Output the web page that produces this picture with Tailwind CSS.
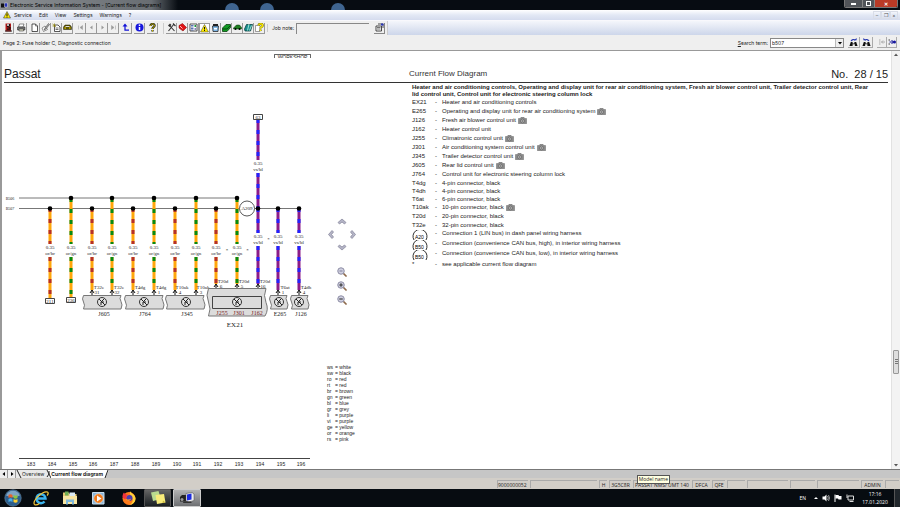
<!DOCTYPE html>
<html lang="en">
<head>
    <meta charset="UTF-8">
    <meta name="viewport" content="width=device-width, initial-scale=1.0">
    <title>Electronic Service Information System</title>
    <script src="https://cdn.jsdelivr.net/npm/@tailwindcss/browser@4"></script>
</head>

<body class="h-screen flex flex-col overflow-hidden bg-[#efefef] font-['Inter',sans-serif] text-[5px] leading-[8px] text-[#222]">
    <svg class="hidden">
        <symbol id="camera" viewBox="0 0 18 14">
            <path d="M1 3h4l1-2.500h6l1 2.500h4v10.500H1z" fill="#8b8b8b" stroke="#666" />
            <circle cx="9" cy="8" r="3.800" fill="#bbb" stroke="#555" stroke-width="1.200" />
            <circle cx="9" cy="8" r="1.500" fill="#666" />
        </symbol>
        <symbol id="binoculars" viewBox="0 0 20 20">
            <path d="M4 9h4v3h4V9h4l3 9h-6v-4h-5v4H1z" fill="#111" />
            <path d="M5 7a5 4 0 0 1 9-2" fill="none" stroke="#2a3ab0" stroke-width="2.500" />
            <path d="M11 5h6V0z" fill="#2a3ab0" />
        </symbol>
        <symbol id="lens" viewBox="0 0 20 20">
            <path d="M12 12l6 6" stroke="#8d6a4c" stroke-width="3.500" stroke-linecap="round" />
            <circle cx="8" cy="8" r="6.500" fill="#cfcfe0" stroke="#8d8da4" stroke-width="2" />
        </symbol>
        <symbol id="chevron" viewBox="0 0 20 14">
            <path d="M2 9l8-7 8 7-3 3-5-4-5 4z" fill="#b4b4c6" stroke="#85859b" stroke-width="1.500" />
        </symbol>
    </svg>

    <!-- Title bar -->
    <header class="relative h-[10px] shrink-0 flex items-center justify-between overflow-hidden bg-[#070c12]">
        <svg class="absolute inset-0 h-full w-[400px]" viewBox="0 0 400 10">
            <defs>
                <linearGradient id="glow" x1="0" x2="1">
                    <stop offset="0" stop-color="#8b8f93" />
                    <stop offset="0.850" stop-color="#686d72" />
                    <stop offset="1" stop-color="#070c12" />
                </linearGradient>
            </defs>
            <rect width="178" height="10" fill="url(#glow)" />
            <circle cx="232" cy="10" r="7" fill="#3f6590" />
            <circle cx="267" cy="10" r="7" fill="#3f6590" />
            <circle cx="338" cy="10" r="7" fill="#3f6590" />
        </svg>
        <div class="relative flex items-center gap-[2px] pl-px text-black">
            <svg class="size-[7px]" viewBox="0 0 14 14"><path d="M0 3h8v8H0z" fill="#111" /><path d="M7 2h6v8H7z" fill="#2733b5" stroke="#ddd" /></svg>
            <h1>Electronic Service Information System - [Current flow diagrams]</h1>
        </div>
        <div class="relative flex self-start h-[8px] mr-[2px] rounded-b-[2px] overflow-hidden border border-t-0 border-[#777]">
            <button aria-label="Minimize" class="w-[17px] grid place-items-center bg-[#515459]"><span class="w-[5px] h-[2px] bg-white"></span></button>
            <button aria-label="Restore" class="w-[13px] grid place-items-center bg-[#515459] border-x border-[#888]"><span class="size-[5px] border border-white"></span></button>
            <button aria-label="Close" class="w-[22px] grid place-items-center bg-[#b93a26] text-white font-bold leading-[6px]">✕</button>
        </div>
    </header>

    <!-- Menu -->
    <nav class="h-[11px] shrink-0 flex items-center pl-[3px] bg-linear-to-b from-white via-[#e3e8f5] to-[#d5dcee] border-b border-[#f8f8fc]">
        <svg class="size-[8px] mr-[3px]" viewBox="0 0 16 16"><path d="M8 1l7 13H1z" fill="#ffec00" stroke="#222" /><path d="M8 5v5M8 11v2" stroke="#111" stroke-width="2" /></svg>
        <div class="flex gap-[7px]">
            <button>Service</button>
            <button>Edit</button>
            <button>View</button>
            <button>Settings</button>
            <button>Warnings</button>
            <button>?</button>
        </div>
        <div class="ml-auto mr-[2px] flex text-[#555]">
            <button aria-label="Minimize document" class="w-[8px] border border-[#d9dde8] leading-[6px]">–</button>
            <button aria-label="Restore document" class="w-[9px] border border-[#d9dde8] leading-[6px]">❐</button>
            <button aria-label="Close document" class="w-[8px] border border-[#d9dde8] leading-[6px]">×</button>
        </div>
    </nav>

    <!-- Toolbar -->
    <div class="h-[14px] shrink-0 flex bg-linear-to-b from-[#f4f6fb] to-[#cdd6ea]">
        <div class="w-[388px] flex items-center gap-[2px] pl-[3px] bg-[#efefef] border-r border-[#ccc]">
            <button aria-label="Exit" class="size-[11px] grid place-items-center border-r border-b border-[#999]">
                <svg class="size-[9px]" viewBox="0 0 18 18"><path d="M3 1h11v16H3z" fill="#b51919" /><path d="M12 3H7v4l5 2v3H6m5-9v3" fill="none" stroke="#111" stroke-width="2.500" /><circle cx="8" cy="4" r="2" fill="#eee" /><path d="M2 16h14" stroke="#222" stroke-width="2" /></svg>
            </button>
            <button aria-label="Print" class="size-[11px] grid place-items-center border-r border-b border-[#999]">
                <svg class="size-[9px]" viewBox="0 0 18 18"><path d="M5 2h9l-2 6H3z" fill="#fff" stroke="#222" /><path d="M1 8h15v6H1z" fill="#777" stroke="#222" /><path d="M4 12h9v4H4z" fill="#d8d8c0" stroke="#222" /></svg>
            </button>
            <div class="flex">
                <button aria-label="New" class="size-[11px] grid place-items-center border-r border-b border-[#999]">
                    <svg class="size-[9px]" viewBox="0 0 18 18"><path d="M4 2h7l4 4v11H4z" fill="#fff" stroke="#222" stroke-width="1.500" /><path d="M11 2v4h4" fill="none" stroke="#222" /></svg>
                </button>
                <button aria-label="Edit" class="size-[11px] grid place-items-center border-r border-b border-[#999]">
                    <svg class="size-[9px]" viewBox="0 0 18 18"><path d="M2 10l6-4 5 7-8 4z" fill="#fff" stroke="#333" /><path d="M15 1l-7 9-2 4 4-2 7-9z" fill="#aaa" stroke="#333" /></svg>
                </button>
                <button aria-label="Order" class="size-[11px] grid place-items-center border-r border-b border-[#999]">
                    <svg class="size-[9px]" viewBox="0 0 18 18"><path d="M5 4h7l4 4v9H5z" fill="#fff" stroke="#222" stroke-width="1.500" /><path d="M1 2l6 5M5 1v6M1 6h7" stroke="#887c00" stroke-width="1.500" /><path d="M7 10h6M7 13h6" stroke="#444" stroke-width="1.500" /></svg>
                </button>
                <button aria-label="Vehicle" class="size-[11px] grid place-items-center border-r border-b border-[#999]">
                    <svg class="size-[9px]" viewBox="0 0 18 18"><path d="M1 8l3-4h10l3 4v5H1z" fill="#5c5400" stroke="#221f00" /><path d="M5 6h8v2H5z" fill="#ddd" /><path d="M3 10h3M12 10h3" stroke="#ffe100" stroke-width="2" /></svg>
                </button>
            </div>
            <div class="flex">
                <button aria-label="First" class="size-[11px] grid place-items-center border-r border-b border-[#999]"><svg class="size-[7px]" viewBox="0 0 14 14"><path d="M3 3v8M11 3L6 7l5 4z" fill="#999" stroke="#999" /></svg></button>
                <button aria-label="Previous" class="size-[11px] grid place-items-center border-r border-b border-[#999]"><svg class="size-[7px]" viewBox="0 0 14 14"><path d="M9 3L4 7l5 4z" fill="#999" /></svg></button>
                <button aria-label="Next" class="size-[11px] grid place-items-center border-r border-b border-[#999]"><svg class="size-[7px]" viewBox="0 0 14 14"><path d="M5 3l5 4-5 4z" fill="#999" /></svg></button>
                <button aria-label="Last" class="size-[11px] grid place-items-center border-r border-b border-[#999]"><svg class="size-[7px]" viewBox="0 0 14 14"><path d="M11 3v8M3 3l5 4-5 4z" fill="#999" stroke="#999" /></svg></button>
            </div>
            <button aria-label="Back" class="size-[11px] grid place-items-center border-r border-b border-[#999]">
                <svg class="size-[9px]" viewBox="0 0 18 18"><path d="M6 5v9h8" fill="none" stroke="#1414d8" stroke-width="2.500" /><path d="M1 7l5-6 5 6z" fill="#1414d8" /></svg>
            </button>
            <button aria-label="Info" class="size-[11px] grid place-items-center border-r border-b border-[#999]">
                <svg class="size-[9px]" viewBox="0 0 18 18"><circle cx="9" cy="9" r="8" fill="#1717dd" /><path d="M9 3v3M9 8v6" stroke="#fff" stroke-width="3" /></svg>
            </button>
            <button aria-label="Help" class="size-[11px] grid place-items-center border-r border-b border-[#999]">
                <svg class="size-[9px]" viewBox="0 0 18 18"><path d="M5 6c0-6 9-5 8 0-1 3-4 2-4 6M9 14v3" fill="none" stroke="#222" stroke-width="4.500" /><path d="M5 6c0-6 9-5 8 0-1 3-4 2-4 6M9 14v3" fill="none" stroke="#c9bb00" stroke-width="2" /></svg>
            </button>
            <div class="ml-[3px] pl-[2px] flex border-l border-[#ccc]">
                <button aria-label="Repair" class="size-[11px] grid place-items-center border-r border-b border-[#999]">
                    <svg class="size-[9px]" viewBox="0 0 18 18"><path d="M2 5l4-4 3 3-4 4z" fill="#333" /><path d="M5 5l10 11M14 2L3 16M12 1l5 5" fill="none" stroke="#333" stroke-width="2.200" /></svg>
                </button>
                <button aria-label="Maintenance" class="size-[11px] grid place-items-center border-r border-b border-[#999]">
                    <svg class="size-[9px]" viewBox="0 0 18 18"><path d="M2 5l7-4 8 8-7 7-8-6z" fill="#e01515" stroke="#700" /><path d="M4 6l5 5" stroke="#fff" stroke-width="1.500" /></svg>
                </button>
                <button aria-label="Body" class="size-[11px] grid place-items-center border-r border-b border-[#999]">
                    <svg class="size-[9px]" viewBox="0 0 18 18"><path d="M2 2h14v14H2z" fill="#fff" stroke="#222" stroke-width="1.500" /><path d="M4 5h5M4 8h5M4 11h5M4 14h5" stroke="#249" stroke-width="1.500" /><path d="M11 4h3v4h-3z" fill="#1a9a3a" /><path d="M11 10h3v4h-3z" fill="#88b" /></svg>
                </button>
                <button aria-label="Warnings" class="size-[11px] grid place-items-center border border-[#999] bg-white">
                    <svg class="size-[9px]" viewBox="0 0 18 18"><path d="M9 1l8 15H1z" fill="#ffec00" stroke="#333" /><path d="M9 6v5M9 12v2" stroke="#111" stroke-width="2" /></svg>
                </button>
                <button aria-label="Fluids" class="size-[11px] grid place-items-center border-r border-b border-[#999]">
                    <svg class="size-[9px]" viewBox="0 0 18 18"><path d="M3 6h12l-1 11H4z" fill="#7fb7e6" stroke="#222" stroke-width="1.500" /><path d="M4 2h10v4H4z" fill="#222" /><path d="M6 10h6v3H6z" fill="#fff" /></svg>
                </button>
                <button aria-label="Workshop manual" class="size-[11px] grid place-items-center border-r border-b border-[#999]">
                    <svg class="size-[9px]" viewBox="0 0 18 18"><path d="M1 10l7-7h9v6l-7 8H1z" fill="#129a22" stroke="#053a0a" stroke-width="1.500" /><path d="M2 12h8l7-7" fill="none" stroke="#064d0d" stroke-width="2" /></svg>
                </button>
                <button aria-label="Labour" class="size-[11px] grid place-items-center border-r border-b border-[#999]">
                    <svg class="size-[9px]" viewBox="0 0 18 18"><path d="M1 10l3-3 3-3h6l4 5v3H1z" fill="#1f7d1f" stroke="#093009" /><circle cx="5" cy="12" r="2" /><circle cx="13" cy="12" r="2" /></svg>
                </button>
                <button aria-label="Manuals" class="size-[11px] grid place-items-center border-r border-b border-[#999]">
                    <svg class="size-[9px]" viewBox="0 0 18 18"><path d="M1 12l4-9h12l-4 13H2z" fill="#1a8f8f" stroke="#063b3b" stroke-width="1.500" /><path d="M10 2L7 15M15 5l-4 10" stroke="#cfe" stroke-width="1.500" /></svg>
                </button>
                <button aria-label="Vehicle help" class="size-[11px] grid place-items-center border-r border-b border-[#999]">
                    <svg class="size-[9px]" viewBox="0 0 18 18"><path d="M1 5h9v12H1z" fill="#fff" stroke="#444" /><path d="M7 5c1-5 10-4 8 1-1 2-4 2-4 5M11 13v3" fill="none" stroke="#777000" stroke-width="4.500" /><path d="M7 5c1-5 10-4 8 1-1 2-4 2-4 5M11 13v3" fill="none" stroke="#ffee00" stroke-width="2.500" /></svg>
                </button>
            </div>
            <label for="jobNote" class="pl-[4px] whitespace-nowrap border-l border-[#ccc]">Job note:</label>
            <input id="jobNote" type="text" class="w-[73px] h-[11px] px-px border-t border-l border-[#888]">
            <button aria-label="Edit note" class="ml-[3px] size-[11px] grid place-items-center border-r border-b border-[#888]">
                <svg class="size-[9px]" viewBox="0 0 18 18"><path d="M2 6h11v10H2zM6 2h10v8" fill="#fff" stroke="#333" stroke-width="1.800" /><path d="M4 9h7M4 12h7" stroke="#444" stroke-width="1.500" /><path d="M12 1h5v4h-5z" fill="#2835b8" /></svg>
            </button>
        </div>
    </div>

    <!-- Page info and search -->
    <div class="h-[16px] shrink-0 flex items-center justify-between pl-[3px] pr-[3px] border-b border-[#999]">
        <p>Page 2: Fuse holder C, Diagnostic connection</p>
        <form class="flex items-center gap-[2px]">
            <label for="searchTerm"><u>S</u>earch term:</label>
            <div class="flex h-[10px] w-[74px] bg-white border border-[#888]">
                <input id="searchTerm" type="text" value="b507" class="min-w-0 flex-1 px-px">
                <button type="button" aria-label="Show list" class="w-[8px] grid place-items-center bg-[#eee] border-l border-[#bbb]"><svg class="size-[4px]" viewBox="0 0 8 8"><path d="M0 2h8L4 7z" /></svg></button>
            </div>
            <div class="ml-[2px] flex gap-px">
                <button type="button" aria-label="Search forward" class="w-[12px] h-[11px] grid place-items-center border-r border-b border-[#aaa]"><svg class="size-[9px]"><use href="#binoculars" /></svg></button>
                <button type="button" aria-label="Search back" class="w-[12px] h-[11px] grid place-items-center border-r border-b border-[#aaa]"><svg class="size-[9px] -scale-x-100"><use href="#binoculars" /></svg></button>
            </div>
            <div class="ml-[2px] flex">
                <button type="button" aria-label="Previous hit" class="w-[10px] h-[11px] grid place-items-center border-r border-b border-[#aaa]"><svg class="size-[8px]" viewBox="0 0 16 16"><path d="M2 4h3M2 8h3M2 12h3M7 8h7M10 5L7 8l3 3" fill="none" stroke="#aaa" stroke-width="2" /></svg></button>
                <button type="button" aria-label="Next hit" class="w-[10px] h-[11px] grid place-items-center border-r border-b border-[#aaa]"><svg class="size-[8px]" viewBox="0 0 16 16"><path d="M1 4h3M1 12h3" fill="none" stroke="#444" stroke-width="2" /><path d="M3 8h9M7 4l4 4-4 4" fill="none" stroke="#15159c" stroke-width="2" /><circle cx="13" cy="8" r="3" fill="#15159c" /></svg></button>
            </div>
        </form>
    </div>

    <!-- Document -->
    <div class="flex-1 min-h-0 flex bg-white border-l-2 border-[#999] font-['Liberation_Sans',sans-serif]">
        <main class="flex-1 min-w-0 flex flex-col">
            <div class="h-[16px] shrink-0 pl-[272px] pt-[3px]">
                <div class="w-[37px] h-[4px] overflow-hidden rounded-t-[1px] border border-b-0 border-[#666] text-center leading-[4px]">WORKSHOP</div>
            </div>
            <div class="h-[16px] shrink-0 ml-[2px] mr-[3px] pb-[2px] grid grid-cols-[405px_1fr_auto] items-center border-b border-[#333]">
                <h2 class="text-[12px] leading-[12px]">Passat</h2>
                <h3 class="text-[8px] leading-[12px] text-[#333]">Current Flow Diagram</h3>
                <p class="text-[11px] leading-[12px] whitespace-pre">No.  28 / 15</p>
            </div>
            <div class="flex-1 min-h-0 flex">
                <svg id="diagram" class="w-[318px] h-[387px] shrink-0 font-['Liberation_Serif',serif] text-[5px]" viewBox="2 83 318 387" text-anchor="middle" fill="#222">
                    <path d="M19 198H237M19 208.500H240M254 208.500H299" stroke="#777" fill="none" />
                    <g id="wires"></g>
                    <text x="10" y="200" font-size="4">B506</text>
                    <text x="10" y="210" font-size="4">B507</text>
                    <circle cx="247" cy="208.500" r="7.500" fill="#fff" stroke="#555" />
                    <text x="247" y="210">A209</text>
                    <g fill="#fff" stroke="#444">
                        <path d="M45.500 298.500h9v5h-9zM66.500 297.500h9v5h-9zM253.500 114.500h9v5h-9z" />
                    </g>
                    <text x="50" y="303">211</text>
                    <text x="71" y="302">236</text>
                    <text x="258" y="119">63</text>
                    <g fill="#dcdcdc" stroke="#777">
                        <path d="M83.500 295.500H121q-2 3 0 6t0 7.500H83.500q2-4 0-7t0-6.500z" />
                        <path d="M125.500 295.500H163q-2 3 0 6t0 7.500H125.500q2-4 0-7t0-6.500z" />
                        <path d="M166.500 295.500H204q-2 3 0 6t0 7.500H166.500q2-4 0-7t0-6.500z" />
                        <path d="M208.500 288.500H266q-3 7 0 14t-1 13.500H208.500q3-7 0-14t0-13.500z" />
                        <path d="M212.500 296.500h49v12h-49z" stroke="#444" />
                        <path d="M270.500 295.500H287q-2 3 0 6t0 7.500H270.500q2-4 0-7t0-6.500z" />
                        <path d="M291.500 295.500H308q-2 3 0 6t0 7.500H291.500q2-4 0-7t0-6.500z" />
                    </g>
                    <g id="units"></g>
                    <g font-size="6">
                        <text x="104" y="316">J605</text>
                        <text x="145" y="316">J764</text>
                        <text x="187" y="316">J345</text>
                        <text x="222" y="315" fill="#722">J255</text>
                        <text x="239" y="315" fill="#722">J301</text>
                        <text x="257" y="315" fill="#722">J162</text>
                        <text x="280" y="316">E265</text>
                        <text x="301" y="316">J126</text>
                    </g>
                    <text x="235" y="327" font-size="7">EX21</text>
                    <text x="227" y="252">*</text>
                    <text x="247.500" y="252">*</text>
                    <text x="268.500" y="241">*</text>
                    <path d="M19 458.500H310" stroke="#444" />
                    <g id="tracks" class="font-['Liberation_Sans',sans-serif]"></g>
                </svg>

                <!-- Navigation and colour key -->
                <div class="w-[90px] shrink-0 pt-[135px] pl-[5px]">
                    <div class="w-[34px] grid grid-cols-3 place-items-center gap-y-[6px]">
                        <button aria-label="Up" class="col-start-2 row-start-1"><svg class="w-[10px] h-[7px]"><use href="#chevron" /></svg></button>
                        <button aria-label="Left" class="col-start-1 row-start-2"><svg class="w-[10px] h-[7px] -rotate-90"><use href="#chevron" /></svg></button>
                        <button aria-label="Right" class="col-start-3 row-start-2"><svg class="w-[10px] h-[7px] rotate-90"><use href="#chevron" /></svg></button>
                        <button aria-label="Down" class="col-start-2 row-start-3"><svg class="w-[10px] h-[7px] rotate-180"><use href="#chevron" /></svg></button>
                    </div>
                    <div class="w-[34px] mt-[16px] flex flex-col items-center gap-[4px]">
                        <button aria-label="Fit"><svg class="size-[10px]" viewBox="0 0 20 20"><use href="#lens" /><path d="M5 8h6" stroke="#9a9ab0" stroke-width="3" /></svg></button>
                        <button aria-label="Zoom in"><svg class="size-[10px]" viewBox="0 0 20 20"><use href="#lens" /><path d="M8 4.500v7M4.500 8h7" stroke="#333" stroke-width="2.200" /></svg></button>
                        <button aria-label="Zoom out"><svg class="size-[10px]" viewBox="0 0 20 20"><use href="#lens" /><path d="M4.500 8h7" stroke="#333" stroke-width="2.200" /></svg></button>
                    </div>
                    <dl class="mt-[59px] ml-[2px] grid grid-cols-[8px_1fr] leading-[6px]">
                        <dt>ws</dt><dd>= white</dd>
                        <dt>sw</dt><dd>= black</dd>
                        <dt>ro</dt><dd>= red</dd>
                        <dt>rt</dt><dd>= red</dd>
                        <dt>br</dt><dd>= brown</dd>
                        <dt>gn</dt><dd>= green</dd>
                        <dt>bl</dt><dd>= blue</dd>
                        <dt>gr</dt><dd>= grey</dd>
                        <dt>li</dt><dd>= purple</dd>
                        <dt>vi</dt><dd>= purple</dd>
                        <dt>ge</dt><dd>= yellow</dd>
                        <dt>or</dt><dd>= orange</dd>
                        <dt>rs</dt><dd>= pink</dd>
                    </dl>
                </div>

                <!-- Component list -->
                <section class="flex-1 min-w-0 pt-px pl-[2px] text-[6px] leading-[7px]">
                    <h4 class="pr-[16px] font-bold">Heater and air conditioning controls, Operating and display unit for rear air conditioning system, Fresh air blower control unit, Trailer detector control unit, Rear lid control unit, Control unit for electronic steering column lock</h4>
                    <table class="text-left">
                        <tbody>
                            <tr class="h-[9px]"><td class="w-[23px]">EX21</td><td class="w-[7px]">-</td><td>Heater and air conditioning controls</td></tr>
                            <tr class="h-[9px]"><td>E265</td><td>-</td><td class="flex items-center gap-[2px] pt-px">Operating and display unit for rear air conditioning system <svg class="w-[9px] h-[7px]"><use href="#camera" /></svg></td></tr>
                            <tr class="h-[9px]"><td>J126</td><td>-</td><td class="flex items-center gap-[2px] pt-px">Fresh air blower control unit <svg class="w-[9px] h-[7px]"><use href="#camera" /></svg></td></tr>
                            <tr class="h-[9px]"><td>J162</td><td>-</td><td>Heater control unit</td></tr>
                            <tr class="h-[9px]"><td>J255</td><td>-</td><td class="flex items-center gap-[2px] pt-px">Climatronic control unit <svg class="w-[9px] h-[7px]"><use href="#camera" /></svg></td></tr>
                            <tr class="h-[9px]"><td>J301</td><td>-</td><td class="flex items-center gap-[2px] pt-px">Air conditioning system control unit <svg class="w-[9px] h-[7px]"><use href="#camera" /></svg></td></tr>
                            <tr class="h-[9px]"><td>J345</td><td>-</td><td class="flex items-center gap-[2px] pt-px">Trailer detector control unit <svg class="w-[9px] h-[7px]"><use href="#camera" /></svg></td></tr>
                            <tr class="h-[9px]"><td>J605</td><td>-</td><td class="flex items-center gap-[2px] pt-px">Rear lid control unit <svg class="w-[9px] h-[7px]"><use href="#camera" /></svg></td></tr>
                            <tr class="h-[9px]"><td>J764</td><td>-</td><td>Control unit for electronic steering column lock</td></tr>
                            <tr class="h-[8px]"><td>T4dg</td><td>-</td><td>4-pin connector, black</td></tr>
                            <tr class="h-[8px]"><td>T4dh</td><td>-</td><td>4-pin connector, black</td></tr>
                            <tr class="h-[8px]"><td>T6at</td><td>-</td><td>6-pin connector, black</td></tr>
                            <tr class="h-[9px]"><td>T10ak</td><td>-</td><td class="flex items-center gap-[2px] pt-px">10-pin connector, black <svg class="w-[9px] h-[7px]"><use href="#camera" /></svg></td></tr>
                            <tr class="h-[9px]"><td>T20d</td><td>-</td><td>20-pin connector, black</td></tr>
                            <tr class="h-[9px]"><td>T32e</td><td>-</td><td>32-pin connector, black</td></tr>
                            <tr class="h-[10px] align-top"><td><svg class="w-[16px] h-[10px]" viewBox="0 0 16 10"><path d="M2 10a7 7 0 1 1 12 0" fill="none" stroke="#333" /><text x="3" y="9" font-size="5">A20</text></svg></td><td>-</td><td>Connection 1 (LIN bus) in dash panel wiring harness</td></tr>
                            <tr class="h-[10px] align-top"><td><svg class="w-[16px] h-[10px]" viewBox="0 0 16 10"><path d="M2 10a7 7 0 1 1 12 0" fill="none" stroke="#333" /><text x="3" y="9" font-size="5">B50</text></svg></td><td>-</td><td>Connection (convenience CAN bus, high), in interior wiring harness</td></tr>
                            <tr class="h-[10px] align-top"><td><svg class="w-[16px] h-[10px]" viewBox="0 0 16 10"><path d="M2 10a7 7 0 1 1 12 0" fill="none" stroke="#333" /><text x="3" y="9" font-size="5">B50</text></svg></td><td>-</td><td>Connection (convenience CAN bus, low), in interior wiring harness</td></tr>
                            <tr class="h-[9px]"><td>*</td><td>-</td><td>see applicable current flow diagram</td></tr>
                        </tbody>
                    </table>
                </section>
            </div>
        </main>
        <div class="w-[9px] shrink-0 flex flex-col items-center justify-between py-[2px] bg-[#f3f3f3] border-l border-[#e2e2e2]">
            <svg class="size-[4px]" viewBox="0 0 8 8"><path d="M0 6h8L4 1z" fill="#555" /></svg>
            <div class="flex-1 w-full flex flex-col px-px">
                <div class="flex-[295]"></div>
                <div class="flex-[22] grid place-content-center gap-px bg-[#dedede] border border-[#999] rounded-[1px]"><span class="w-[3px] h-px bg-[#777]"></span><span class="w-[3px] h-px bg-[#777]"></span><span class="w-[3px] h-px bg-[#777]"></span></div>
                <div class="flex-[90]"></div>
            </div>
            <svg class="size-[4px]" viewBox="0 0 8 8"><path d="M0 2h8L4 7z" fill="#555" /></svg>
        </div>
    </div>

    <!-- Sheet tabs -->
    <div class="h-[9px] shrink-0 flex bg-[#c6c6c6] border-t border-[#777]">
        <button aria-label="Scroll tabs left" class="w-[8px] grid place-items-center bg-[#eee] border-r border-[#999]"><svg class="size-[4px]" viewBox="0 0 8 8"><path d="M6 0v8L1 4z" /></svg></button>
        <button aria-label="Scroll tabs right" class="w-[8px] grid place-items-center bg-[#eee] border-r border-[#999]"><svg class="size-[4px]" viewBox="0 0 8 8"><path d="M2 0v8l5-4z" /></svg></button>
        <button class="flex bg-[#e9e9e9]"><svg class="w-[6px] h-[8px]" viewBox="0 0 6 8"><path d="M1 0l4 8" stroke="#222" /></svg>Overview<svg class="w-[7px] h-[8px]" viewBox="0 0 7 8"><path d="M3 0h4v8z" fill="#fff" /><path d="M3 0l4 8M5 1Q6 4 3 7" fill="none" stroke="#222" /></svg></button>
        <button class="flex bg-white font-bold">Current flow diagram<svg class="w-[6px] h-[8px]" viewBox="0 0 6 8"><path d="M6 0v8H2z" fill="#c6c6c6" /><path d="M5 0L2 8" stroke="#222" /></svg></button>
    </div>

    <!-- Status bar -->
    <footer class="relative h-[11px] shrink-0 flex justify-end items-end gap-[2px] pr-px pb-px bg-[#d2cec8] font-['Open_Sans',sans-serif] leading-[8px]">
        <span class="w-[31px] h-[8px] border-l border-t border-[#aaa] whitespace-nowrap">9000000052</span>
        <span class="w-[67px] h-[8px] border-l border-t border-[#aaa]"></span>
        <span class="w-[8px] h-[8px] border-l border-t border-[#aaa] text-center">H</span>
        <span class="w-[22px] h-[8px] border-l border-t border-[#aaa] text-center">3G5C8R</span>
        <span class="w-[57px] h-[8px] border-l border-t border-[#aaa] text-center whitespace-nowrap">PASSAT NMS/ UMT 140</span>
        <span class="w-[18px] h-[8px] border-l border-t border-[#aaa] text-center">DFCA</span>
        <span class="w-[13px] h-[8px] border-l border-t border-[#aaa] text-center">QFE</span>
        <span class="w-[18px] h-[8px] border-l border-t border-[#aaa]"></span>
        <span class="w-[41px] h-[8px] border-l border-t border-[#aaa]"></span>
        <span class="w-[25px] h-[8px] border-l border-t border-[#aaa]"></span>
        <span class="w-[42px] h-[8px] border-l border-t border-[#aaa]"></span>
        <span class="w-[22px] h-[8px] border-l border-t border-[#aaa] text-center">ADMIN</span>
        <span class="w-[14px] h-[8px] border-l border-t border-[#aaa]"></span>
        <div role="tooltip" class="absolute right-[230px] -top-[3px] h-[9px] px-px bg-[#ffffe1] border border-[#555] leading-[7px]">Model name</div>
    </footer>

    <!-- Taskbar -->
    <div class="h-[18px] shrink-0 flex items-center bg-[#070c11] text-white font-['Open_Sans',sans-serif]">
        <button aria-label="Start" class="w-[26px] grid place-items-center">
            <svg class="size-[18px]" viewBox="0 0 36 36"><circle cx="18" cy="18" r="16.500" fill="#2b5d8c" stroke="#7896b1" /><path d="M4 13a15 15 0 0 1 28 0q-14 6-28 0" fill="#7ea5c5" /><path d="M9 12q4-3 8 0v6q-4-3-8 0z" fill="#e8632a" /><path d="M19 12q4 3 8 0v6q-4 3-8 0z" fill="#8cc63f" /><path d="M9 20q4-3 8 0v6q-4-3-8 0z" fill="#4bb0e8" /><path d="M19 20q4 3 8 0v6q-4 3-8 0z" fill="#ffd02e" /></svg>
        </button>
        <button aria-label="Internet Explorer" class="w-[29px] grid place-items-center">
            <svg class="size-[16px]" viewBox="0 0 32 32"><path d="M8 17h17a9 9 0 1 0-2 6" fill="none" stroke="#3bb4ee" stroke-width="5" /><path d="M3 29c-5-7 16-28 26-25 3 2 0 6-1 7M3 29c3 2 7 0 10-2" fill="none" stroke="#f5c63a" stroke-width="2.500" /></svg>
        </button>
        <button aria-label="Explorer" class="w-[29px] grid place-items-center">
            <svg class="size-[16px]" viewBox="0 0 32 32"><path d="M2 5h11l2 3h14v20H2z" fill="#e5c873" /><path d="M6 3h7v8H6z" fill="#6fae55" /><path d="M15 5h11v8H15z" fill="#d9e9f5" /><path d="M2 12h28v16H2z" fill="#f7e5a1" /><path d="M8 19h16v10h-4v-5h-8v5H8z" fill="#7fb8dc" /></svg>
        </button>
        <button aria-label="Media Player" class="w-[29px] grid place-items-center">
            <svg class="size-[15px]" viewBox="0 0 30 30"><path d="M3 3h23v23H3z" fill="#88b4d8" stroke="#c8ddec" stroke-width="2" /><circle cx="15" cy="15" r="9.500" fill="#f07a1c" stroke="#fff" /><path d="M12 9l9 6-9 6z" fill="#fff" /></svg>
        </button>
        <button aria-label="Firefox" class="w-[31px] grid place-items-center">
            <svg class="size-[16px]" viewBox="0 0 32 32"><circle cx="16" cy="17" r="13" fill="#ff7a1a" /><path d="M18 2c2 5 11 7 11 15 0 7-5 13-13 13 9-4 9-12 5-17-3-3-4-7-3-11z" fill="#ffd23a" /><path d="M3 14c0-4 1-7 3-9 1 3 4 4 8 4-4 3-4 6-1 8-5 3-8 0-10-3z" fill="#f0323e" /><circle cx="17" cy="16" r="6" fill="#4a3cb0" /><path d="M9 16c3 4 8 4 11 1-1 6-9 7-11-1z" fill="#ff9a25" /></svg>
        </button>
        <button aria-label="Sticky Notes" class="w-[27px] h-[18px] mr-[2px] grid place-items-center bg-linear-to-b from-[#666] to-[#1b2023] border border-[#555] rounded-[1px]">
            <svg class="size-[16px]" viewBox="0 0 32 32"><path d="M2 5l15-3 5 16-16 4z" fill="#b9dc8f" /><path d="M11 10l17-2 3 17-17 3z" fill="#f8ec7a" /><path d="M25 26l6-1-5-4z" fill="#c9b93c" /></svg>
        </button>
        <button aria-label="Service system" class="w-[28px] h-[18px] grid place-items-center bg-linear-to-b from-[#b4b4b4] to-[#6e7073] border border-[#ccc] rounded-[1px]">
            <svg class="size-[16px]" viewBox="0 0 32 32"><path d="M2 14l4-4h8l3 4v9H2z" fill="#222" /><circle cx="6" cy="19" r="3" fill="#999" /><path d="M14 7l12-2 4 3v13l-10 3-6-2z" fill="#eee" stroke="#444" /><path d="M16 9l9-2v12l-9 2z" fill="#1b2ae0" /><path d="M9 23h14l3 3H8z" fill="#333" /></svg>
        </button>
        <div class="ml-auto flex items-center gap-[4px]">
            <span class="mr-[4px]">EN</span>
            <svg class="size-[4px]" viewBox="0 0 8 8"><path d="M0 6h8L4 2z" fill="#fff" /></svg>
            <svg class="size-[8px]" viewBox="0 0 16 16"><path d="M1 5h4l4-4v14l-4-4H1z" fill="#fff" /><path d="M11 4q3 4 0 8M13 2q4 6 0 12" fill="none" stroke="#ccc" stroke-width="1.500" /></svg>
            <svg class="size-[8px]" viewBox="0 0 16 16"><path d="M2 1v15" stroke="#fff" stroke-width="2" /><path d="M3 2h6l1 2h5v7H9L8 9H3z" fill="#fff" /></svg>
            <svg class="size-[8px]" viewBox="0 0 16 16"><path d="M4 4h11v8H4zM7 15h8M2 1v7" fill="none" stroke="#ddd" stroke-width="2" /></svg>
            <time class="w-[30px] ml-[2px] text-center leading-[8px]">17:16<br>17.01.2020</time>
            <button aria-label="Show desktop" class="w-[6px] h-[18px] bg-[#20262b] border-l border-[#555]"></button>
        </div>
    </div>

    <script>
        // x, top, end, gap start, colour, pin connector, pin number
        const wires = [
            [50, 208, 298, 244, 'or/br'],
            [71, 198, 297, 244, 'or/gn'],
            [92, 208, 290, 244, 'or/br', 'T32e', '31'],
            [112, 198, 290, 244, 'or/gn', 'T32e', '32'],
            [133, 208, 290, 244, 'or/br', 'T4dg', '2'],
            [154, 198, 290, 244, 'or/gn', 'T4dg', '1'],
            [175, 208, 290, 244, 'or/br', 'T10ak', '4'],
            [196, 198, 290, 244, 'or/gn', 'T10ak', '3'],
            [216, 208, 284, 244, 'or/br', 'T20d', '6'],
            [237, 198, 284, 244, 'or/gn', 'T20d', '5'],
            [258, 119, 208, 160, 'vs/bl'],
            [258, 208, 284, 233, 'vs/bl', 'T20d', '16'],
            [278, 208, 290, 233, 'vs/bl', 'T6at', '1'],
            [299, 208, 290, 233, 'vs/bl', 'T4dh', '4']
        ];
        const stripe = { 'or/br': '#b5302a', 'or/gn': '#078a12', 'vs/bl': '#2323ff' };

        let out = '';
        wires.forEach(([x, top, end, gap, name, conn, pin]) => {
            const base = name === 'vs/bl' ? '#8c1c88' : '#ffa60a';
            const path = `M${x} ${top}V${gap}M${x} ${gap + 13}V${end}`;
            out += `<path d="${path}" stroke="${base}" stroke-width="3"/>`;
            out += `<path d="${path}" stroke="${stripe[name]}" stroke-width="3" stroke-dasharray="4 7"/>`;
            out += `<text x="${x}" y="${gap + 5}">0.35</text><text x="${x}" y="${gap + 11}">${name}</text>`;
            if (top !== 119) out += `<circle cx="${x}" cy="${top === 208 ? 208.5 : top}" r="2.300" fill="#000"/>`;
            if (conn) {
                out += `<path d="M${x} ${end + 5}v-5M${x - 2} ${end + 3}l2-3 2 3" fill="none" stroke="#111"/>`;
                out += `<text x="${x + 7}" y="${end - 1}">${conn}</text><text x="${x + 5}" y="${end + 4}">${pin}</text>`;
            }
        });
        document.getElementById('wires').innerHTML = out;

        document.getElementById('units').innerHTML = [102, 144, 186, 237, 279, 299].map(x =>
            `<circle cx="${x}" cy="302" r="4.500" fill="#e4e4e4" stroke="#333"/><path d="M${x - 3} 299l6 6M${x + 2} 299l-3 3v3M${x - 1} 302h3" fill="none" stroke="#222"/>`
        ).join('');

        let tracks = '';
        for (let i = 0; i < 14; i++) {
            tracks += `<text x="${31 + Math.round(i * 20.8)}" y="466">${183 + i}</text>`;
        }
        document.getElementById('tracks').innerHTML = tracks;
    </script>
</body>

</html>
